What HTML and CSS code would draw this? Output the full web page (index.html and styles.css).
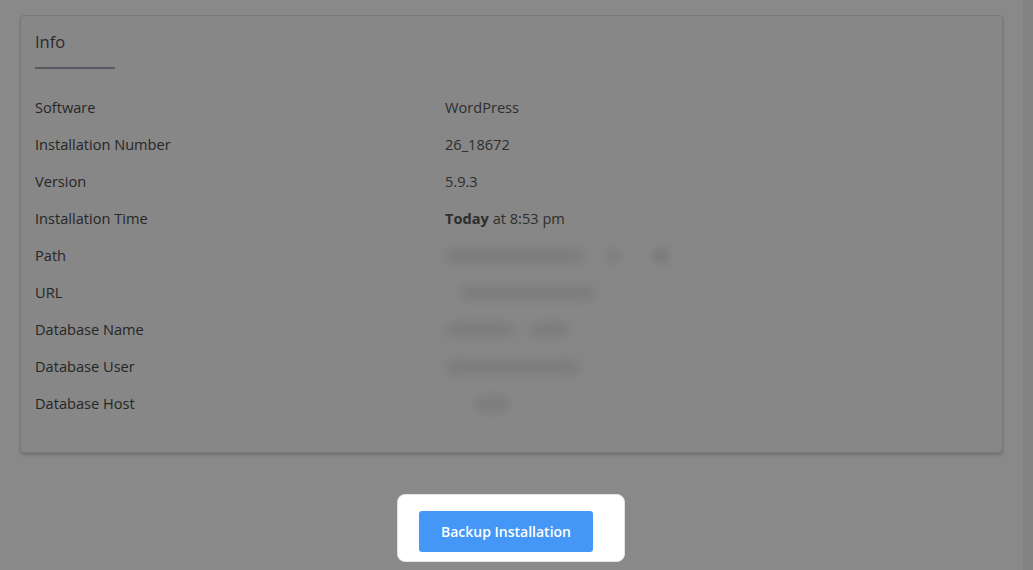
FILE: index.html
```html
<!DOCTYPE html>
<html lang="en">
<head>
  <meta charset="UTF-8">
  <meta name="viewport" content="width=device-width, initial-scale=1.0">
  <title>Installation Info</title>
  <link rel="stylesheet" href="styles.css">
</head>
<body>
  <div class="page">
    <main class="main">
      <section class="card">
        <h2 class="card-title">Info</h2>
        <dl class="info">
          <dt>Software</dt><dd>WordPress</dd>
          <dt>Installation Number</dt><dd>26_18672</dd>
          <dt>Version</dt><dd>5.9.3</dd>
          <dt>Installation Time</dt><dd><b>Today</b> at 8:53 pm</dd>
          <dt>Path</dt>
          <dd class="hidden-val"><span class="blob w140"></span><span class="dot d1"></span><span class="dot d2"></span></dd>
          <dt>URL</dt>
          <dd class="hidden-val"><span class="blob w135 ml15"></span></dd>
          <dt>Database Name</dt>
          <dd class="hidden-val"><span class="blob w70"></span><span class="blob w40 ml15"></span></dd>
          <dt>Database User</dt>
          <dd class="hidden-val"><span class="blob w135"></span></dd>
          <dt>Database Host</dt>
          <dd class="hidden-val"><span class="blob w35 ml30"></span></dd>
        </dl>
      </section>
      <div class="spotlight">
        <button class="btn-primary">Backup Installation</button>
      </div>
    </main>
    <div class="scroll-track"></div>
  </div>
</body>
</html>
```

FILE: styles.css
```css
* { box-sizing: border-box; }
html, body { height: 100%; }
body {
  margin: 0;
  font-family: "Open Sans", Arial, sans-serif;
  background: #898989;
  color: #262626;
  overflow: hidden;
}
.page { display: flex; height: 100%; }
.main { flex: 1; padding: 15px 20px 0 20px; }
.scroll-track { width: 10px; background: #838383; }

.card {
  background: #878787;
  border: 1px solid #787878;
  border-radius: 4px;
  box-shadow: 0 2px 3px rgba(0,0,0,0.18);
  padding: 14px 14px 30px;
}
.card-title {
  margin: 0;
  display: inline-block;
  font-size: 16.5px;
  font-weight: 400;
  line-height: 24px;
  color: #2a2a2a;
  padding: 0 0 13px;
  width: 80px;
  border-bottom: 2px solid #565b61;
}
.info {
  margin: 20px 0 0;
  display: grid;
  grid-template-columns: 410px 1fr;
  font-size: 14.6px;
  line-height: 37px;
}
.info dt, .info dd { margin: 0; height: 37px; }
.info dd { color: #2e2e2e; }
.info b { font-weight: 700; }

.hidden-val { display: flex; align-items: center; }
.blob {
  display: inline-block;
  height: 14px;
  background: #7c7c7c;
  border-radius: 8px;
  filter: blur(5px);
}
.w140 { width: 140px; }
.w135 { width: 135px; }
.w70 { width: 70px; }
.w40 { width: 40px; }
.w35 { width: 35px; }
.ml15 { margin-left: 15px; }
.ml30 { margin-left: 30px; }
.dot {
  display: inline-block;
  width: 16px;
  height: 16px;
  border-radius: 50%;
  background: #7e7e80;
  filter: blur(4px);
}
.d1 { margin-left: 20px; }
.d2 { margin-left: 32px; background: #79797c; }

.spotlight {
  width: 228px;
  margin: 41px 0 0 377px;
  background: #fff;
  border: 1px solid #dfe4ea;
  border-radius: 8px;
  padding: 16px 31px 9px 21px;
}
.btn-primary {
  display: block;
  width: 174px;
  height: 41px;
  border: none;
  border-radius: 3px;
  background: #4597f7;
  color: #fff;
  font-family: inherit;
  font-size: 14px;
  font-weight: 600;
  cursor: pointer;
}
```
